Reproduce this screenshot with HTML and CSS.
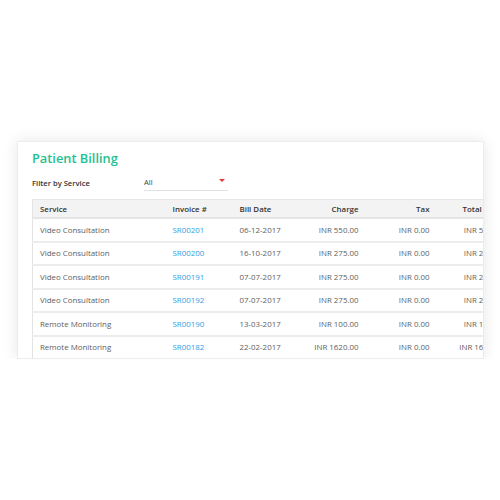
FILE: index.html
```html
<!DOCTYPE html>
<html>
<head>
  <meta name="viewport" content="width=device-width, initial-scale=1.0">
  <link rel="stylesheet" href="styles.css">
</head>
<body>
  <div class="card">
    <h1 class="title">Patient Billing</h1>

    <div class="filter">
      <label class="filter-label">Filter by Service</label>
      <div class="select">
        <span>All</span>
        <span class="caret"></span>
      </div>
    </div>

    <table class="bills">
      <colgroup>
        <col class="c-service">
        <col class="c-invoice">
        <col class="c-date">
        <col class="c-charge">
        <col class="c-tax">
        <col class="c-total">
      </colgroup>
      <thead>
        <tr>
          <th>Service</th>
          <th>Invoice #</th>
          <th>Bill Date</th>
          <th class="num">Charge</th>
          <th class="num">Tax</th>
          <th class="total-head">Total</th>
        </tr>
      </thead>
      <tbody>
        <tr>
          <td>Video Consultation</td>
          <td><a href="#">SR00201</a></td>
          <td>06-12-2017</td>
          <td class="num">INR 550.00</td>
          <td class="num">INR 0.00</td>
          <td class="num">INR 550.00</td>
        </tr>
        <tr>
          <td>Video Consultation</td>
          <td><a href="#">SR00200</a></td>
          <td>16-10-2017</td>
          <td class="num">INR 275.00</td>
          <td class="num">INR 0.00</td>
          <td class="num">INR 275.00</td>
        </tr>
        <tr>
          <td>Video Consultation</td>
          <td><a href="#">SR00191</a></td>
          <td>07-07-2017</td>
          <td class="num">INR 275.00</td>
          <td class="num">INR 0.00</td>
          <td class="num">INR 275.00</td>
        </tr>
        <tr>
          <td>Video Consultation</td>
          <td><a href="#">SR00192</a></td>
          <td>07-07-2017</td>
          <td class="num">INR 275.00</td>
          <td class="num">INR 0.00</td>
          <td class="num">INR 275.00</td>
        </tr>
        <tr>
          <td>Remote Monitoring</td>
          <td><a href="#">SR00190</a></td>
          <td>13-03-2017</td>
          <td class="num">INR 100.00</td>
          <td class="num">INR 0.00</td>
          <td class="num">INR 100.00</td>
        </tr>
        <tr>
          <td>Remote Monitoring</td>
          <td><a href="#">SR00182</a></td>
          <td>22-02-2017</td>
          <td class="num">INR 1620.00</td>
          <td class="num">INR 0.00</td>
          <td class="num">INR 1620.00</td>
        </tr>
      </tbody>
    </table>
  </div>
</body>
</html>
```

FILE: styles.css
```css
html, body {
  margin: 0;
  padding: 0;
  background-color: #fff;
}

body {
  padding: 141px 0 0 17px;
  font-family: "Open Sans", "Noto Sans", sans-serif;
}

.card {
  width: 451px;
  height: 209px;
  padding: 7px 0 0 14px;
  background-color: #fff;
  border: 1px solid #ececec;
  box-shadow: 0 0 14px rgba(0, 0, 0, 0.10);
  overflow: hidden;
}

.title {
  margin: 0;
  font-size: 12.8px;
  line-height: 18px;
  font-weight: 600;
  color: #1ec18d;
}

.filter {
  display: flex;
  align-items: center;
  height: 17px;
  margin-top: 7px;
}

.filter-label {
  width: 112px;
  font-size: 7.6px;
  font-weight: 600;
  color: #333;
}

.select {
  display: flex;
  align-items: center;
  justify-content: space-between;
  width: 84px;
  height: 16px;
  border-bottom: 1px solid #e2e2e2;
  font-size: 7.6px;
  color: #444;
}

.caret {
  width: 0;
  height: 0;
  margin: 0 3px 3px 0;
  border-left: 3px solid transparent;
  border-right: 3px solid transparent;
  border-top: 3px solid #e53935;
}

.bills {
  margin-top: 8px;
  width: 478px;
  table-layout: fixed;
  border-collapse: collapse;
  border-left: 1px solid #e3e3e3;
  font-size: 7.9px;
}

.c-service { width: 133px; }
.c-invoice { width: 67px; }
.c-date { width: 66px; }
.c-charge { width: 67px; }
.c-tax { width: 71px; }
.c-total { width: 74px; }

.bills th {
  height: 17px;
  padding: 0 7px;
  background-color: #f3f3f3;
  border-top: 1px solid #e6e6e6;
  border-bottom: 2px solid #e6e6e6;
  text-align: left;
  font-weight: 600;
  color: #333;
  white-space: nowrap;
}

.bills td {
  height: 21.5px;
  padding: 0 7px;
  border-bottom: 2px solid #ececec;
  color: #5e5e5e;
  white-space: nowrap;
}

.bills .num {
  text-align: right;
}

.bills .total-head {
  padding-left: 26px;
}

.bills a {
  color: #2ba0e6;
  text-decoration: none;
}
```
